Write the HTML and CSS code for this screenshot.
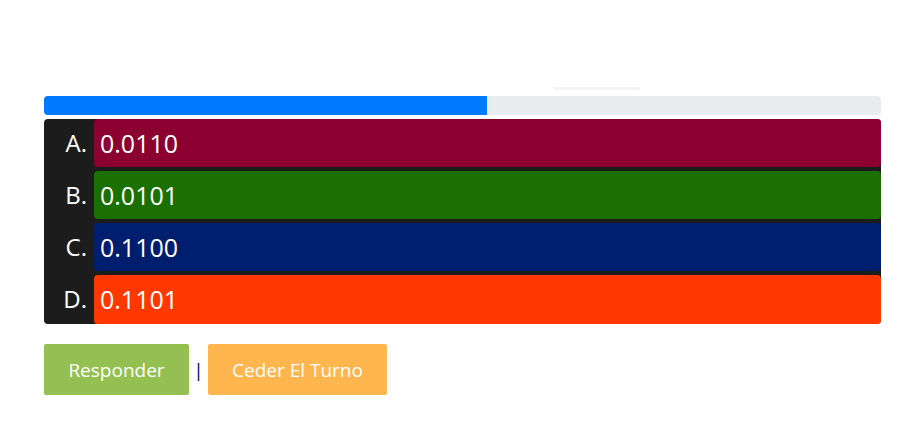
FILE: index.html
```html
<!DOCTYPE html>
<html lang="es">
<head>
<meta charset="utf-8">
<title>Pregunta</title>
<link rel="stylesheet" href="styles.css">
</head>
<body>
<main class="quiz">
  <div class="tip-row"><span class="tip"></span></div>
  <div class="progress"><div class="progress-fill" style="width:52.9%"></div></div>
  <div class="options">
    <div class="option"><span class="letter">A.</span><span class="answer a">0.0110</span></div>
    <div class="option"><span class="letter">B.</span><span class="answer b">0.0101</span></div>
    <div class="option"><span class="letter">C.</span><span class="answer c">0.1100</span></div>
    <div class="option"><span class="letter">D.</span><span class="answer d">0.1101</span></div>
  </div>
  <div class="actions">
    <button class="btn btn-answer">Responder</button>
    <span class="sep">|</span>
    <button class="btn btn-pass">Ceder El Turno</button>
  </div>
</main>
</body>
</html>
```
FILE: styles.css
```css
* { box-sizing: border-box; }
html, body { margin: 0; padding: 0; background: #fff; }
body { font-family: "Open Sans", "Liberation Sans", sans-serif; }
.quiz {
  width: 837px;
  margin-left: 44px;
  padding-top: 87px;
}
.tip-row {
  height: 9px;
  display: flex;
  padding-left: 508px;
}
.tip {
  display: block;
  width: 90px;
  height: 3px;
  background: #f4f5f6;
  clip-path: polygon(0 0, 100% 0, 97% 100%, 3% 100%);
}
.progress {
  height: 19px;
  background: #e9ecef;
  border-radius: 4px;
  overflow: hidden;
  display: flex;
}
.progress-fill {
  height: 100%;
  background: #007bff;
}
.options {
  margin-top: 4px;
  background: #1c1c1c;
  border-radius: 4px;
  display: flex;
  flex-direction: column;
  gap: 4px;
}
.option {
  display: flex;
  height: 48px;
}
.option:last-child { height: 49px; }
.letter {
  width: 50px;
  flex: none;
  color: #fff;
  font-size: 24px;
  text-align: right;
  padding-right: 7px;
  line-height: 48px;
}
.answer {
  flex: 1;
  border-radius: 4px;
  color: #fff;
  font-size: 25px;
  line-height: 48px;
  padding-left: 6px;
}
.a { background: #8b0030; }
.b { background: #1a7000; }
.c { background: #001e6e; }
.d { background: #ff3800; }
.actions {
  margin-top: 20px;
  display: flex;
  align-items: center;
}
.btn {
  font-family: "Open Sans", "Liberation Sans", sans-serif;
  font-size: 19px;
  color: #fff;
  border: 0;
  border-radius: 2px;
  height: 51px;
  padding: 0;
}
.btn-answer { background: #94bf51; width: 145px; }
.btn-pass { background: #ffb64e; width: 179px; }
.sep {
  color: #000080;
  font-size: 19px;
  width: 19px;
  text-align: center;
}
```
